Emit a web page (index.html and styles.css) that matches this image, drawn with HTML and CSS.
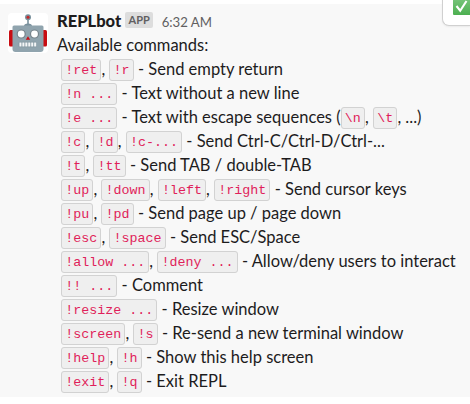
FILE: index.html
```
<!DOCTYPE html>
<html lang="en">
<head>
<meta charset="utf-8">
<title>REPLbot</title>
<link rel="stylesheet" href="styles.css">
</head>
<body>
<article class="message">
  <svg class="avatar" viewBox="0 0 40 40">
    <rect width="40" height="40" rx="4" fill="#fff"/>
    <path d="M20 5v8" stroke="#78909c" stroke-width="1.6"/>
    <circle cx="20" cy="4.200" r="3" fill="#78909c"/>
    <circle cx="20" cy="4.200" r="1.500" fill="#c62828"/>
    <rect x="1" y="17" width="5" height="16.500" rx="1.500" fill="#c80c12"/>
    <rect x="34" y="17" width="5" height="16.500" rx="1.500" fill="#c80c12"/>
    <path d="M16 13q0-2.500 4-2.500t4 2.500z" fill="#78909c"/>
    <path d="M6 12.500h28q1.500 0 1.500 1.500v22q0 3-3 3H7.500q-3 0-3-3V14q0-1.500 1.500-1.500z" fill="#90a4ae"/>
    <circle cx="13.200" cy="21" r="4.600" fill="#78858c"/>
    <circle cx="26.500" cy="21" r="4.600" fill="#78858c"/>
    <circle cx="13.200" cy="21" r="3.400" fill="#fff"/>
    <circle cx="26.500" cy="21" r="3.400" fill="#fff"/>
    <path d="M20 23.200l2.200 3.600h-4.400z" fill="#c80c12"/>
    <rect x="10.500" y="28.800" width="18.500" height="5.400" rx="1.500" fill="#8296a0"/>
    <path d="M11.400 31.500h17" stroke="#f4f6f7" stroke-width="4.200" stroke-dasharray="2.100 .85"/>
  </svg>
  <div class="content">
    <header class="meta"><b class="name">REPLbot</b><span class="badge">APP</span><time class="time">6:32 AM</time></header>
    <p class="line">Available commands:</p>
    <p class="line cmd"><code>!ret</code>, <code>!r</code> - Send empty return</p>
    <p class="line cmd"><code>!n ...</code> - Text without a new line</p>
    <p class="line cmd"><code>!e ...</code> - Text with escape sequences (<code>\n</code>, <code>\t</code>, ...)</p>
    <p class="line cmd"><code>!c</code>, <code>!d</code>, <code>!c-...</code> - Send Ctrl-C/Ctrl-D/Ctrl-...</p>
    <p class="line cmd"><code>!t</code>, <code>!tt</code> - Send TAB / double-TAB</p>
    <p class="line cmd"><code>!up</code>, <code>!down</code>, <code>!left</code>, <code>!right</code> - Send cursor keys</p>
    <p class="line cmd"><code>!pu</code>, <code>!pd</code> - Send page up / page down</p>
    <p class="line cmd"><code>!esc</code>, <code>!space</code> - Send ESC/Space</p>
    <p class="line cmd"><code>!allow ...</code>, <code>!deny ...</code> - Allow/deny users to interact</p>
    <p class="line cmd"><code>!! ...</code> - Comment</p>
    <p class="line cmd"><code>!resize ...</code> - Resize window</p>
    <p class="line cmd"><code>!screen</code>, <code>!s</code> - Re-send a new terminal window</p>
    <p class="line cmd"><code>!help</code>, <code>!h</code> - Show this help screen</p>
    <p class="line cmd"><code>!exit</code>, <code>!q</code> - Exit REPL</p>
  </div>
</article>
<div class="actions">
  <svg class="check" viewBox="0 0 18 18">
    <defs><linearGradient id="g" x2="0" y2="1"><stop offset="0" stop-color="#7cc77f"/><stop offset="1" stop-color="#4caf50"/></linearGradient></defs>
    <rect width="18" height="18" rx="1" fill="url(#g)"/>
    <path d="M3.500 9l3.700 4.700L13.500 4" fill="none" stroke="#fff" stroke-width="2.100"/>
  </svg>
</div>
</body>
</html>
```
FILE: styles.css
```
body {
  margin: 0;
  padding-top: 4px;
  height: 400px;
  box-sizing: border-box;
  overflow: hidden;
  position: relative;
  background: #fff;
  color: #1d1c1d;
  font-family: Lato, sans-serif;
  font-size: 16.5px;
}
.message {
  display: flex;
  gap: 9px;
  height: 393px;
  box-sizing: border-box;
  padding: 5px 0 0 8px;
  background: #f8f8f8;
}
.avatar {
  width: 40px;
  height: 40px;
  margin-top: 4px;
  flex: none;
}
.content {
  white-space: nowrap;
}
.meta {
  display: flex;
  height: 24px;
  line-height: 24px;
}
.name {
  font-weight: 900;
}
.badge {
  margin: 3px 0 0 4px;
  width: 28px;
  text-align: center;
  height: 16px;
  line-height: 16px;
  border-radius: 2px;
  background: #dddddd;
  color: #616061;
  font-size: 11px;
  font-weight: 700;
}
.time {
  margin-left: 8.500px;
  line-height: 26px;
  color: #616061;
  font-size: 13.2px;
}
.line {
  margin: 0;
  height: 24px;
  line-height: 24px;
}
.cmd {
  padding-left: 4px;
}
code {
  position: relative;
  top: -1px;
  padding: 3px 3.200px 2px;
  border: 1px solid #d2d2d2;
  border-radius: 3px;
  background: #efefef;
  color: #e01e5a;
  font-family: "Liberation Mono", monospace;
  font-size: 13.333px;
}
.actions {
  position: absolute;
  top: -10px;
  right: 0;
  width: 28px;
  height: 36px;
  box-sizing: border-box;
  padding: 6px 0 0 10px;
  border: 1px solid #d0d0d0;
  border-right: 0;
  border-radius: 7px 0 0 7px;
  background: #fff;
  box-shadow: 0 1px 2px rgba(0, 0, 0, .06);
  overflow: hidden;
}
.check {
  display: block;
  width: 18px;
  height: 18px;
}
```
